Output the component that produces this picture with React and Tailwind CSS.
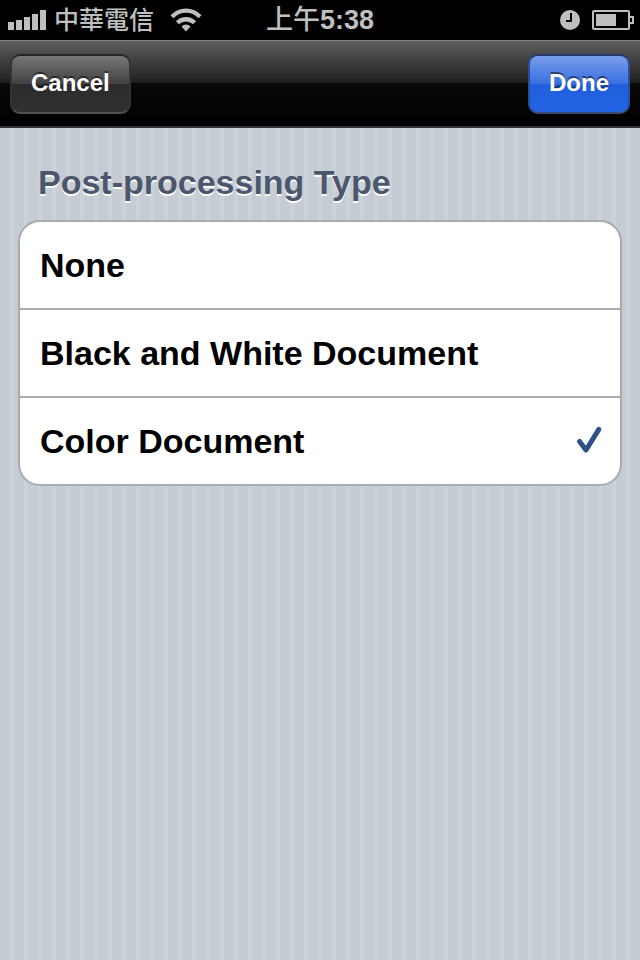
import { useState } from "react";

const OPTIONS = ["None", "Black and White Document", "Color Document"];

function SignalIcon() {
  return (
    <svg width="38" height="20" viewBox="0 0 38 20" fill="#bfbfbf" aria-hidden="true">
      <rect x="0" y="12" width="6" height="8" />
      <rect x="8" y="10" width="6" height="10" />
      <rect x="16" y="7" width="6" height="13" />
      <rect x="24" y="4" width="6" height="16" />
      <rect x="32" y="0" width="6" height="20" />
    </svg>
  );
}

function WifiIcon() {
  return (
    <svg width="32" height="24" viewBox="0 0 32 24" fill="none" stroke="#bfbfbf" strokeWidth="4.4" aria-hidden="true">
      <path d="M2 8.8C9.8 0.6 22.2 0.6 30 8.8" />
      <path d="M7.4 14.8C12.2 10 19.8 10 24.6 14.8" />
      <path d="M16 23.4L11.6 18.8C14 15.8 18 15.8 20.4 18.8Z" fill="#bfbfbf" stroke="none" />
    </svg>
  );
}

function ClockIcon() {
  return (
    <svg width="20" height="20" viewBox="0 0 20 20" aria-hidden="true">
      <circle cx="10" cy="10" r="10" fill="#bfbfbf" />
      <path d="M11 3V11H6" fill="none" stroke="#000" strokeWidth="2" />
    </svg>
  );
}

function BatteryIcon() {
  return (
    <svg width="42" height="20" viewBox="0 0 42 20" aria-hidden="true">
      <rect x="1" y="1" width="36" height="18" rx="1" fill="none" stroke="#bfbfbf" strokeWidth="2" />
      <rect x="4" y="4" width="20" height="12" fill="#bfbfbf" />
      <path d="M38 7H41V13H38" fill="none" stroke="#bfbfbf" strokeWidth="2" />
    </svg>
  );
}

function StatusBar() {
  return (
    <div className="grid h-10 grid-cols-[1fr_auto_1fr] items-center bg-black px-1.5 text-[#bfbfbf]">
      <div className="flex items-center pl-0.5">
        <SignalIcon />
        <span className="ml-2 text-[25px] leading-10 font-medium">中華電信</span>
        <span className="ml-4">
          <WifiIcon />
        </span>
      </div>
      <time className="text-[27px] leading-10 font-bold">
        <span className="font-medium">上午</span>5:38
      </time>
      <div className="flex items-center justify-end gap-3">
        <ClockIcon />
        <BatteryIcon />
      </div>
    </div>
  );
}

function NavBar() {
  return (
    <header className="flex h-[88px] items-start justify-between border-t border-b-2 border-t-[#858585] border-b-[#2d3035] bg-[linear-gradient(#5e5e5e,#1d1d1d_50%,#080808_50%,#000)] px-2.5 pt-[13px] text-white">
      <button
        type="button"
        className="h-[60px] rounded-[10px] border-2 border-t-[#242424] border-r-[#333] border-b-[#505050] border-l-[#333] bg-[linear-gradient(#777,#414141_50%,#2c2c2c_50%,#303030)] px-[19px] pb-0.5 text-2xl font-bold [text-shadow:0_-2px_0_#00000080]"
      >
        Cancel
      </button>
      <button
        type="button"
        className="h-[60px] rounded-[10px] border-2 border-t-[#263a70] border-r-[#2b4da0] border-b-[#3b4a70] border-l-[#2b4da0] bg-[linear-gradient(#7b9eea,#376fe0_50%,#215fdc_50%,#2363e2)] px-[19px] pb-0.5 text-2xl font-bold [text-shadow:0_-2px_0_#00000080]"
      >
        Done
      </button>
    </header>
  );
}

function Checkmark() {
  return (
    <svg
      className="invisible peer-checked:visible"
      width="26"
      height="30"
      viewBox="0 0 26 30"
      fill="none"
      stroke="#2f4f87"
      strokeWidth="5"
      strokeLinecap="round"
      strokeLinejoin="round"
      aria-hidden="true"
    >
      <path d="M3.6 15.4L10 24L22.8 3.4" />
    </svg>
  );
}

export default function App() {
  const [selected, setSelected] = useState("Color Document");

  return (
    <div className="flex min-h-screen flex-col bg-[#c5ccd4] font-['Liberation_Sans','Noto_Sans_CJK_TC',sans-serif]">
      <StatusBar />
      <NavBar />
      <main className="flex-1 bg-[repeating-linear-gradient(90deg,#c5ccd4_0px,#c5ccd4_10px,#cbd2d8_10px,#cbd2d8_14px)] px-[18px] pt-9">
        <h1 id="type-heading" className="px-5 text-[34px] leading-9 font-bold text-[#4c566c] [text-shadow:0_2px_0_#fff]">
          Post-processing Type
        </h1>
        <div
          role="radiogroup"
          aria-labelledby="type-heading"
          className="mt-5 divide-y-2 divide-[#abadb1] overflow-hidden rounded-[22px] border-2 border-[#a7abb0] bg-white"
        >
          {OPTIONS.map((option) => (
            <label key={option} className="flex h-[88px] items-center pr-[18px] pl-5 text-[34px] leading-10 font-bold text-black last:h-[86px]">
              <input
                type="radio"
                name="post-processing"
                value={option}
                checked={selected === option}
                onChange={() => setSelected(option)}
                className="peer sr-only"
              />
              <span className="flex-1">{option}</span>
              <Checkmark />
            </label>
          ))}
        </div>
      </main>
    </div>
  );
}
